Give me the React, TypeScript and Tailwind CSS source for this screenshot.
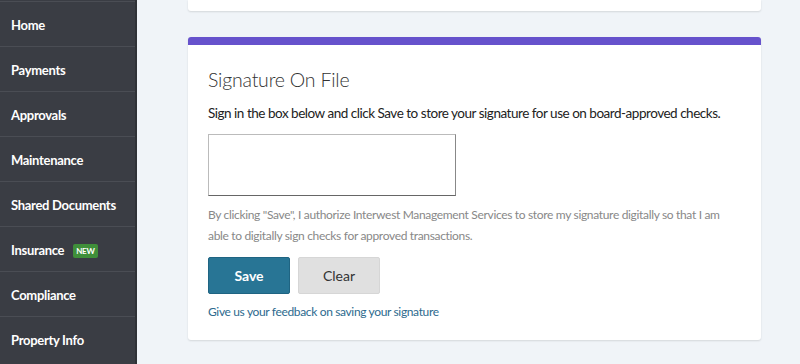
import React from 'react';

const navItems = [
    'Home',
    'Payments',
    'Approvals',
    'Maintenance',
    'Shared Documents',
    'Insurance',
    'Compliance',
    'Property Info',
];

const Sidebar: React.FC = () => (
    <nav className="w-[137px] shrink-0 bg-[#3a3d44] border-r-2 border-[#2f3237] pt-[1px]">
        {navItems.map(item => (
            <div
                key={item}
                className="h-[45px] flex items-center pl-[11px] pt-[3px] border-t border-[#4a4d54] text-white text-[13px] font-bold tracking-[-0.3px]"
            >
                <span>{item}</span>
                {item === 'Insurance' && (
                    <span className="ml-[9px] bg-[#3f8f3a] text-white text-[8px] font-bold leading-none px-[3px] py-[3px] rounded-[2px]">
                        NEW
                    </span>
                )}
            </div>
        ))}
    </nav>
);

export default function App() {
    return (
        <div
            className="w-[800px] h-[364px] overflow-hidden flex bg-[#f0f4f8]"
            style={{ fontFamily: 'Lato, "Open Sans", sans-serif' }}
        >
            <Sidebar />
            <main className="flex-1 pl-[51px] pr-[39px]">
                <div className="h-[11px] bg-white rounded-b-[3px] shadow-[0_1px_2px_rgba(0,0,0,0.12)]" />
                <section className="mt-[26px] bg-white rounded-[3px] shadow-[0_1px_2px_rgba(0,0,0,0.12)]">
                    <div className="h-[8px] bg-[#6652cc] rounded-t-[3px]" />
                    <div className="px-[20px] pt-[20px] pb-[18px]">
                        <h1 className="text-[19.5px] font-light text-[#333] leading-[30px] tracking-[-0.2px]">Signature On File</h1>
                        <p className="mt-[8px] text-[13.5px] text-[#222] leading-[20px] tracking-[-0.48px] whitespace-nowrap">
                            Sign in the box below and click Save to store your signature for use on board-approved checks.
                        </p>
                        <div className="mt-[11px] w-[248px] h-[62px] border border-[#999] border-t-[#bbb] border-l-[#bbb] border-r-[#888] border-b-[#666] bg-white" />
                        <p className="mt-[8px] text-[12px] text-[#888] leading-[21px] tracking-[-0.33px] max-w-[520px]">
                            By clicking "Save", I authorize Interwest Management Services to store my signature digitally so that I am able to digitally sign checks for approved transactions.
                        </p>
                        <div className="mt-[11px] flex gap-[8px]">
                            <button className="w-[82px] h-[37px] bg-[#287595] border border-[#1f6482] text-white text-[14px] font-bold rounded-[2px]">
                                Save
                            </button>
                            <button className="w-[82px] h-[37px] bg-[#e0e0e0] border border-[#d6d6d6] text-[#333] text-[14px] rounded-[2px]">
                                Clear
                            </button>
                        </div>
                        <a href="#" className="block mt-[8px] text-[12px] text-[#2d6a8e] leading-[20px] tracking-[-0.35px]">
                            Give us your feedback on saving your signature
                        </a>
                    </div>
                </section>
            </main>
        </div>
    );
}
